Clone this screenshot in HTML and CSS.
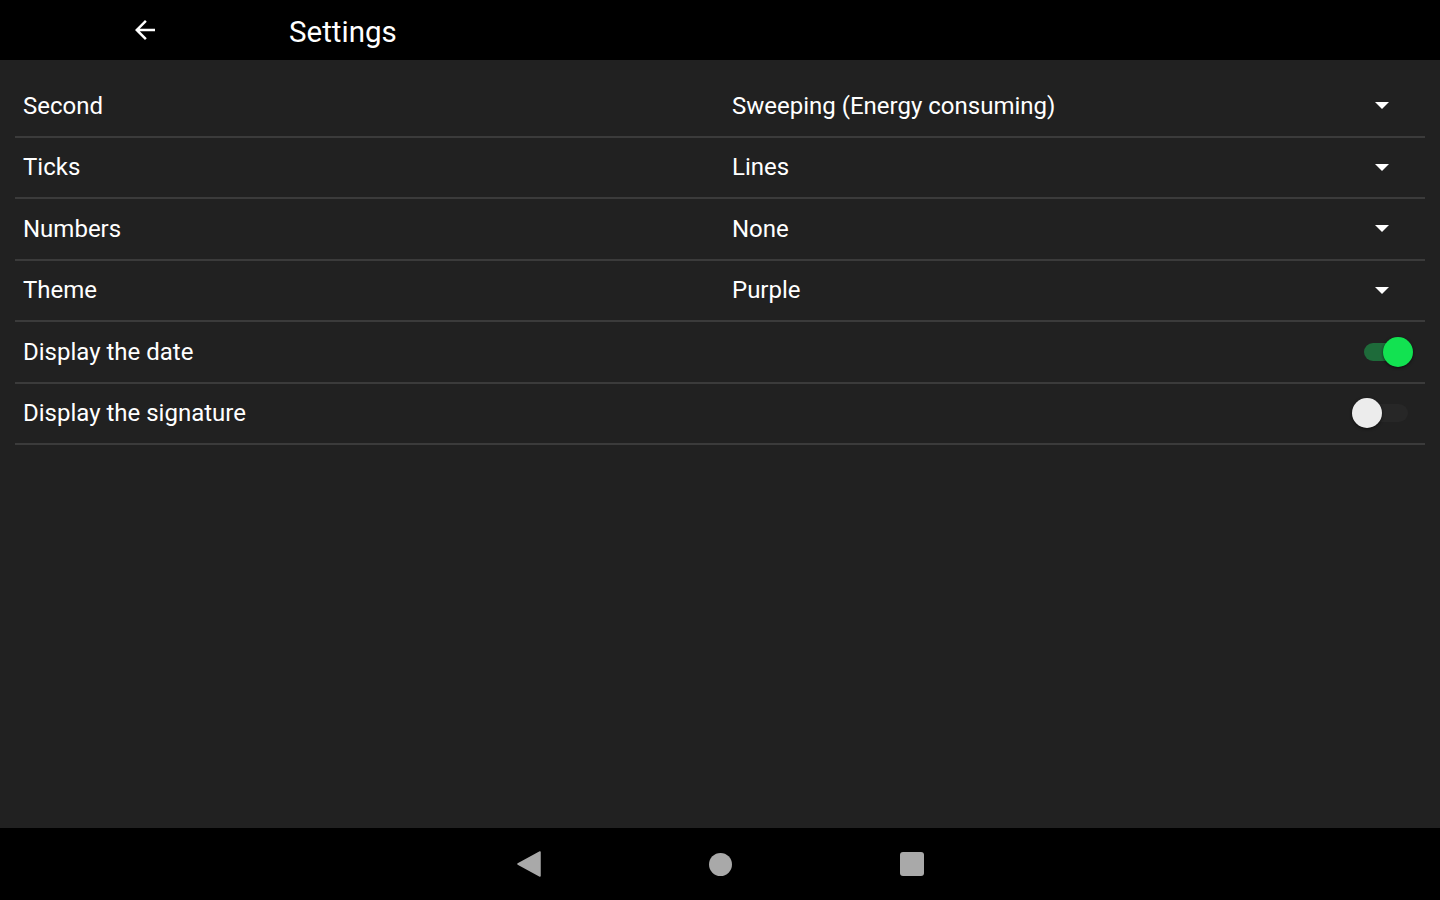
FILE: index.html
```html
<!DOCTYPE html>
<html lang="en">
<head>
  <meta charset="UTF-8">
  <meta name="viewport" content="width=device-width, initial-scale=1.0">
  <title>Settings</title>
  <link rel="stylesheet" href="styles.css">
</head>
<body>
  <div class="screen">
    <header class="toolbar">
      <span class="back">
        <svg width="30" height="30" viewBox="0 0 24 24"><path d="M20 11H7.83l5.59-5.59L12 4l-8 8 8 8 1.41-1.41L7.83 13H20v-2z" fill="#fff"/></svg>
      </span>
      <h1 class="title">Settings</h1>
    </header>

    <main class="content">
      <div class="row">
        <span class="label">Second</span>
        <span class="value">Sweeping (Energy consuming)</span>
        <span class="caret"></span>
      </div>
      <div class="row">
        <span class="label">Ticks</span>
        <span class="value">Lines</span>
        <span class="caret"></span>
      </div>
      <div class="row">
        <span class="label">Numbers</span>
        <span class="value">None</span>
        <span class="caret"></span>
      </div>
      <div class="row">
        <span class="label">Theme</span>
        <span class="value">Purple</span>
        <span class="caret"></span>
      </div>
      <div class="row">
        <span class="label">Display the date</span>
        <span class="switch on"><span class="track"></span><span class="thumb"></span></span>
      </div>
      <div class="row">
        <span class="label">Display the signature</span>
        <span class="switch"><span class="track"></span><span class="thumb"></span></span>
      </div>
    </main>

    <footer class="navbar">
      <svg width="24" height="26" viewBox="0 0 24 26"><path d="M23 1 L1 13 L23 25 Z" fill="#a9a9a9" stroke="#a9a9a9" stroke-linejoin="round" stroke-width="1.5"/></svg>
      <span class="nav-home"></span>
      <span class="nav-recent"></span>
    </footer>
  </div>
</body>
</html>
```

FILE: styles.css
```css
body {
  margin: 0;
  background: #212121;
  font-family: Roboto, "Noto Sans", sans-serif;
  color: #fff;
}
.screen {
  width: 1440px;
  height: 900px;
  display: flex;
  flex-direction: column;
}
.toolbar {
  height: 60px;
  background: #000;
  display: flex;
  align-items: center;
  flex-shrink: 0;
}
.back {
  width: 30px;
  height: 30px;
  margin-left: 130px;
  display: flex;
}
.title {
  margin: 4px 0 0 129px;
  font-size: 29.5px;
  font-weight: 400;
}
.content {
  flex: 1;
  padding: 16px 15px 0 15px;
}
.row {
  height: 59.5px;
  border-bottom: 2px solid #3b3b3b;
  display: flex;
  align-items: center;
  font-size: 24px;
}
.label {
  width: 709px;
  padding-left: 8px;
}
.value {
  flex: 1;
}
.caret {
  width: 0;
  height: 0;
  border-left: 7px solid transparent;
  border-right: 7px solid transparent;
  border-top: 7px solid #fff;
  margin-right: 36px;
}
.switch {
  margin-left: auto;
  margin-right: 12px;
  width: 50px;
  height: 32px;
  position: relative;
}
.track {
  position: absolute;
  left: 1px;
  top: 7px;
  width: 44px;
  height: 18px;
  border-radius: 9px;
  background: #272727;
}
.thumb {
  position: absolute;
  left: -11px;
  top: 1px;
  width: 30px;
  height: 30px;
  border-radius: 50%;
  background: #ececec;
  box-shadow: 0 1px 3px rgba(0,0,0,0.6);
}
.switch.on .track {
  background: #1e6b3a;
}
.switch.on .thumb {
  left: 20px;
  background: #12e251;
}
.navbar {
  height: 72px;
  background: #000;
  flex-shrink: 0;
  display: flex;
  align-items: center;
  justify-content: center;
  gap: 168px;
}
.nav-home {
  width: 23px;
  height: 23px;
  border-radius: 50%;
  background: #a9a9a9;
}
.nav-recent {
  width: 24px;
  height: 24px;
  border-radius: 3px;
  background: #a9a9a9;
}
```
